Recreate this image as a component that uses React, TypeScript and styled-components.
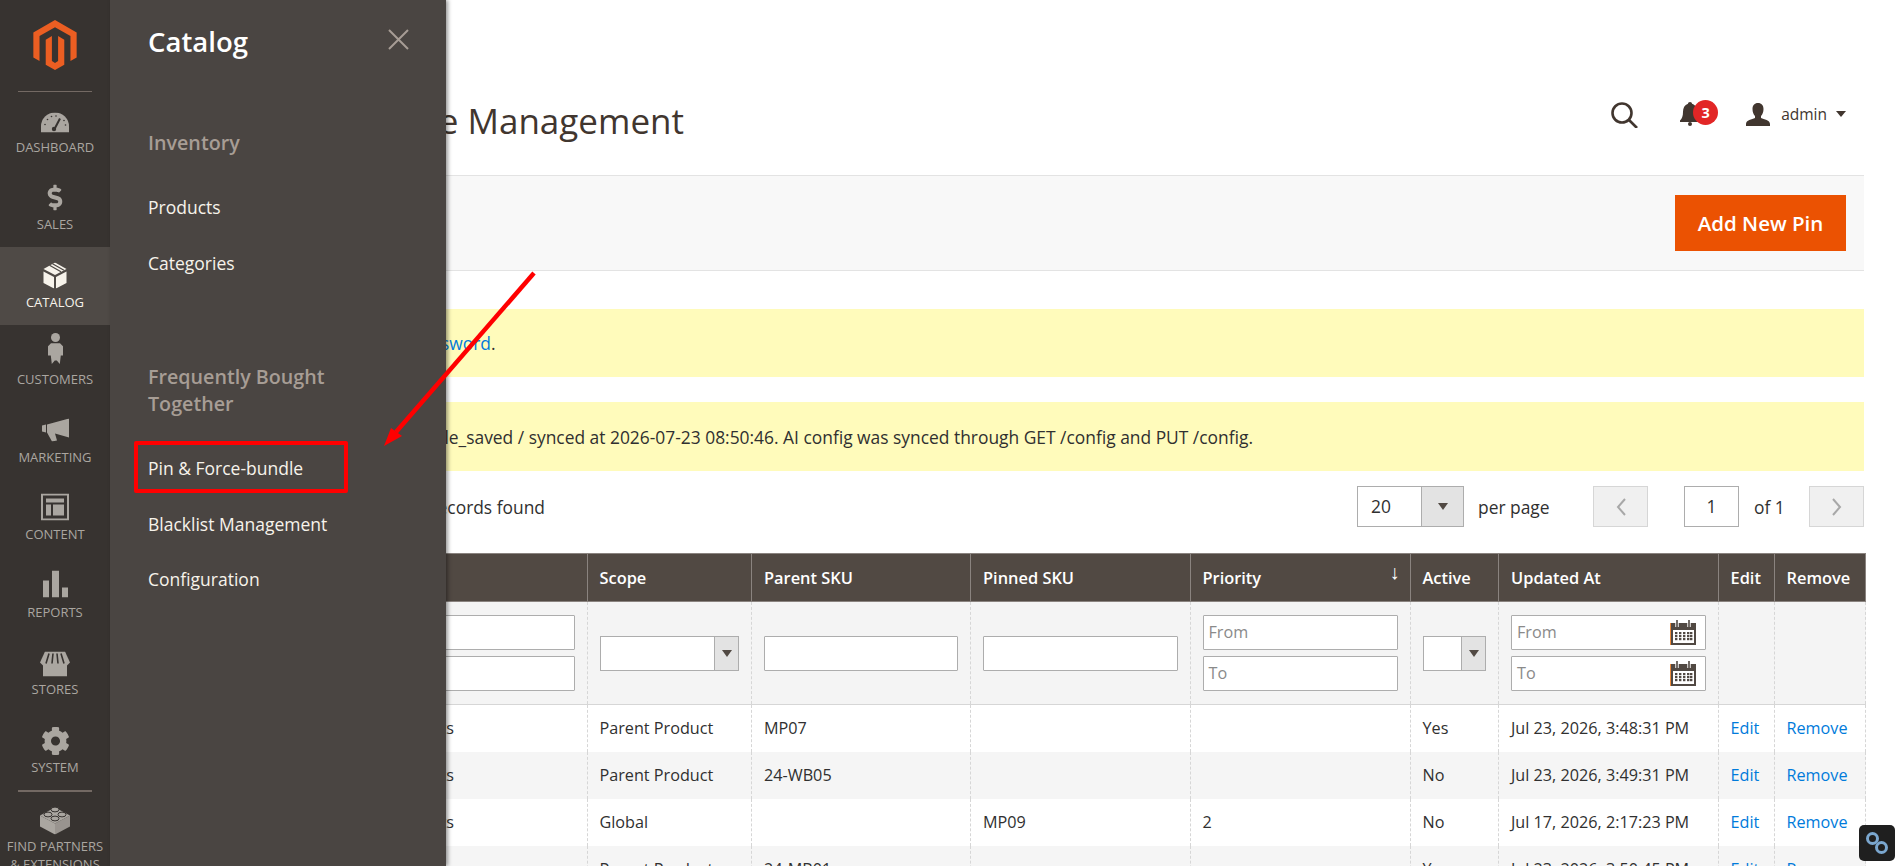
import React from "react";
import styled, { createGlobalStyle } from "styled-components";
import { SiMagento } from "react-icons/si";
import { FaDollarSign, FaCog } from "react-icons/fa";

const Global = createGlobalStyle`
  html, body { margin: 0; padding: 0; height: 866px; overflow: hidden; background: #fff; }
  body { font-family: "Open Sans", "Liberation Sans", sans-serif; color: #41362f; }
  * { box-sizing: border-box; }
`;

const Page = styled.div`
  display: flex;
  width: 1900px;
  height: 866px;
  overflow: hidden;
  position: relative;
`;

const Sidebar = styled.nav`
  width: 110px;
  flex: none;
  height: 866px;
  background: #373330;
  overflow: hidden;
  display: flex;
  flex-direction: column;
`;
const LogoBox = styled.div`
  height: 92px;
  margin: 0 18px;
  border-bottom: 1px solid #736963;
  display: flex;
  justify-content: center;
  padding-top: 20px;
  color: #eb5e22;
  flex: none;
`;
const NavItem = styled.div<{ $active?: boolean; $tall?: boolean }>`
  height: ${(p) => (p.$tall ? "76px" : "77.5px")};
  flex: none;
  display: flex;
  flex-direction: column;
  align-items: center;
  padding-top: 5px;
  background: ${(p) => (p.$active ? "#4f4a46" : "transparent")};
  color: ${(p) => (p.$active ? "#f7f3eb" : "#aaa6a0")};
`;
const IconSlot = styled.div<{ $shift?: number }>`
  height: 40.5px;
  display: flex;
  align-items: center;
  justify-content: center;
  flex: none;
  transform: translateY(${(p) => p.$shift ?? 0}px);
`;
const NavLabel = styled.div`
  font-size: 13px;
  line-height: 18px;
  text-transform: uppercase;
  text-align: center;
  white-space: nowrap;
`;
const PartnerDivider = styled.div`
  height: 2px;
  margin: 0 18px;
  background: #736963;
  flex: none;
`;

const Panel = styled.aside`
  position: absolute;
  left: 110px;
  top: 0;
  width: 335.5px;
  height: 866px;
  background: #4a4542;
  box-shadow: 2px 0 4px rgba(0, 0, 0, 0.4);
  padding-left: 38px;
  z-index: 5;
  color: #f7f3eb;
`;
const PanelHead = styled.div`
  display: flex;
  justify-content: space-between;
  padding: 24px 37px 0 0;
  height: 60px;
  margin-bottom: 69px;
`;
const PanelTitle = styled.div`
  font-size: 27.5px;
  font-weight: 600;
  line-height: 36px;
  color: #fff;
`;
const CloseIcon = styled.svg`
  width: 21px;
  height: 21px;
  margin-top: 5px;
  stroke: #a79d95;
  stroke-width: 2;
`;
const PanelHeading = styled.div`
  font-size: 19.7px;
  font-weight: 600;
  line-height: 27px;
  color: #a79d95;
  margin-bottom: 24px;
  width: 230px;
`;
const PanelLink = styled.div`
  font-size: 17.5px;
  line-height: 55.5px;
  height: 55.5px;
  white-space: nowrap;
  color: #f7f3eb;
`;
const PanelGap = styled.div`
  height: 72px;
`;
const RedBox = styled.div`
  position: absolute;
  left: 134px;
  top: 441px;
  width: 214px;
  height: 52px;
  border: 4px solid #ff0000;
  border-radius: 2px;
  z-index: 6;
`;
const Arrow = styled.svg`
  position: absolute;
  left: 0;
  top: 0;
  width: 1900px;
  height: 866px;
  z-index: 7;
  pointer-events: none;
`;

const Main = styled.main`
  flex: 1;
  min-width: 0;
  padding: 0 36px 0 30px;
  display: flex;
  flex-direction: column;
  font-size: 17.4px;
`;
const TopBar = styled.header`
  height: 175px;
  flex: none;
  display: flex;
  align-items: flex-start;
  justify-content: space-between;
`;
const PageTitle = styled.h1`
  margin: 96px 0 0;
  padding-left: 8px;
  font-size: 35px;
  line-height: 50px;
  font-weight: 400;
  color: #41362f;
  white-space: nowrap;
`;
const TopActions = styled.div`
  display: flex;
  align-items: center;
  margin-top: 100px;
  padding-right: 18px;
  position: relative;
`;
const SearchIcon = styled.svg`
  width: 27px;
  height: 26px;
  margin-right: 42px;
  margin-top: 2px;
  fill: none;
  stroke: #41362f;
  stroke-width: 2.6;
`;
const BellWrap = styled.div`
  position: relative;
  width: 20px;
  height: 24px;
  margin-right: 46px;
`;
const Badge = styled.span`
  position: absolute;
  left: 13px;
  top: -2px;
  width: 25px;
  height: 25px;
  border-radius: 50%;
  background: #e22626;
  color: #fff;
  font-size: 14.5px;
  font-weight: 700;
  line-height: 25px;
  text-align: center;
`;
const UserName = styled.span`
  font-size: 15.5px;
  margin: 0 9px 0 11px;
  line-height: 24px;
  color: #41362f;
`;
const Caret = styled.span`
  width: 0;
  height: 0;
  border-left: 5px solid transparent;
  border-right: 5px solid transparent;
  border-top: 6px solid #41362f;
`;
const ActionBar = styled.div`
  height: 96px;
  flex: none;
  background: #f8f8f8;
  border-top: 1px solid #e3e3e3;
  border-bottom: 1px solid #e3e3e3;
  display: flex;
  justify-content: flex-end;
  padding: 19px 18px 0 0;
`;
const PrimaryButton = styled.button`
  width: 171px;
  height: 56px;
  border: none;
  background: #eb5202;
  color: #fff;
  font-family: inherit;
  font-size: 20.5px;
  font-weight: 600;
  padding: 0;
`;
const Message = styled.div<{ $h: number; $top: number; $pad: number }>`
  height: ${(p) => p.$h}px;
  margin-top: ${(p) => p.$top}px;
  flex: none;
  background: #fffbbb;
  display: flex;
  align-items: center;
  padding-left: ${(p) => p.$pad}px;
  white-space: pre;
  color: #303030;
`;
const Link = styled.a`
  color: #007bdb;
`;
const Pager = styled.div`
  height: 41px;
  margin-top: 15px;
  flex: none;
  display: flex;
  align-items: center;
  justify-content: space-between;
`;
const Found = styled.div<{ $pad: number }>`
  padding-left: ${(p) => p.$pad}px;
  color: #303030;
`;
const PagerRight = styled.div`
  display: flex;
  align-items: center;
`;
const PerSelect = styled.div`
  width: 107px;
  height: 41px;
  border: 1px solid #adadad;
  display: flex;
  background: #fff;
`;
const PerValue = styled.div`
  flex: 1;
  padding-left: 13px;
  line-height: 39px;
  color: #303030;
`;
const SelectArrowBox = styled.div<{ $w: number }>`
  width: ${(p) => p.$w}px;
  flex: none;
  background: #e3e3e3;
  border-left: 1px solid #adadad;
  display: flex;
  align-items: center;
  justify-content: center;
`;
const Tri = styled.span`
  width: 0;
  height: 0;
  border-left: 5px solid transparent;
  border-right: 5px solid transparent;
  border-top: 7px solid #514943;
`;
const PerText = styled.span`
  margin: 0 0 0 14px;
  width: 115px;
  color: #303030;
`;
const PageBtn = styled.div`
  width: 55px;
  height: 41px;
  background: #f0f0f0;
  border: 1px solid #d6d6d6;
  display: flex;
  align-items: center;
  justify-content: center;
`;
const Chevron = styled.svg`
  width: 12px;
  height: 20px;
  fill: none;
  stroke: #a8a8a8;
  stroke-width: 2;
`;
const PageInput = styled.div`
  width: 55px;
  height: 41px;
  margin-left: 36px;
  border: 1px solid #adadad;
  text-align: center;
  line-height: 39px;
  color: #303030;
`;
const OfText = styled.span`
  width: 55px;
  padding-left: 15px;
  margin-right: 15px;
  color: #303030;
`;
const Table = styled.table`
  width: 1724px;
  margin-top: 26px;
  border-collapse: collapse;
  table-layout: fixed;
  font-size: 16.2px;
`;
const Col = styled.col<{ $w: number }>`
  width: ${(p) => p.$w}px;
`;
const Th = styled.th`
  height: 48px;
  background: #514943;
  color: #fff;
  font-size: 16.4px;
  font-weight: 600;
  text-align: left;
  padding: 0 12px;
  border: 1px solid #8a837f;
  position: relative;
  white-space: nowrap;
`;
const SortMark = styled.span`
  position: absolute;
  right: 10px;
  top: 4px;
  font-size: 20px;
  font-weight: 400;
`;
const FilterCell = styled.td`
  height: 103px;
  background: #f4f4f4;
  padding: 0 12px;
  border-left: 1px dashed #d6d6d6;
  border-right: 1px dashed #d6d6d6;
  border-bottom: 1px solid #d6d6d6;
  vertical-align: middle;
`;
const Stack = styled.div`
  display: flex;
  flex-direction: column;
  gap: 6px;
`;
const Field = styled.div`
  position: relative;
  height: 35px;
  width: 100%;
  background: #fff;
  border: 1px solid #adadad;
  border-radius: 1px;
  padding-left: 5px;
  line-height: 33px;
  color: #8a8a8a;
`;
const CalIcon = styled.svg`
  position: absolute;
  right: 9px;
  top: 4px;
  width: 26px;
  height: 25px;
`;
const SelectField = styled.div`
  height: 35px;
  width: 100%;
  background: #fff;
  border: 1px solid #adadad;
  display: flex;
  justify-content: flex-end;
`;
const Td = styled.td<{ $even: boolean }>`
  height: 47px;
  padding: 0 12px;
  background: ${(p) => (p.$even ? "#f5f5f5" : "#fff")};
  border-left: 1px dashed #d6d6d6;
  border-right: 1px dashed #d6d6d6;
  color: #303030;
  white-space: nowrap;
`;
const FloatBtn = styled.div`
  position: absolute;
  left: 1859px;
  top: 825px;
  width: 36px;
  height: 36px;
  border-radius: 5px;
  background: #1f1f1f;
  display: flex;
  align-items: center;
  justify-content: center;
  z-index: 4;
`;

const Gauge = () => (
  <svg width="28" height="20" viewBox="0 0 28 20">
    <path d="M0 20v-6a14 14 0 0 1 28 0v6z" fill="currentColor" />
    <path d="M13 17.5 19 6" stroke="#373330" strokeWidth="2" />
    <circle cx="13" cy="16.5" r="2.2" fill="#373330" />
    <g fill="#373330">
      <circle cx="4" cy="12" r=".8" /><circle cx="6.5" cy="7" r=".8" /><circle cx="10.5" cy="4" r=".8" />
      <circle cx="15" cy="3.5" r=".8" /><circle cx="23" cy="8" r=".8" /><circle cx="24.5" cy="12.5" r=".8" />
    </g>
  </svg>
);
const BoxIcon = () => (
  <svg width="24" height="26" viewBox="0 0 24 26">
    <path d="M0.5 9 11 14.5V26L0.5 20.5z" fill="currentColor" />
    <path d="M23.5 9 13 14.5V26L23.5 20.5z" fill="currentColor" />
    <path d="M12 0 23.5 6.5 12 12.5 0.5 6.5z" fill="currentColor" />
    <path d="M6.5 2.8 18 9.2M9.5 1.3 21 7.7" stroke="#4f4a46" strokeWidth="1.3" fill="none" />
  </svg>
);
const PersonIcon = () => (
  <svg width="15" height="31" viewBox="0 0 15 31">
    <circle cx="7.5" cy="4.5" r="4.5" fill="currentColor" />
    <path d="M3 10.2h9l3 3v9.3h-2.2l-1 8.5-3-3.5h-2l-3 3.5-1-8.5H0v-9.3z" fill="currentColor" />
  </svg>
);
const MegaphoneIcon = () => (
  <svg width="27" height="23" viewBox="0 0 27 23">
    <path d="M0 7l4-1v8l-4-1z" fill="currentColor" />
    <path d="M5 6 27 0V19L13 15l2 7-5 1-5-9z" fill="currentColor" />
  </svg>
);
const ContentIcon = () => (
  <svg width="28" height="27" viewBox="0 0 28 27">
    <rect x="1" y="1" width="26" height="25" fill="none" stroke="currentColor" strokeWidth="2" />
    <rect x="5" y="5" width="18" height="4" fill="currentColor" />
    <rect x="5" y="11" width="5" height="11" fill="currentColor" />
    <rect x="12" y="11" width="11" height="11" fill="currentColor" />
  </svg>
);
const BarsIcon = () => (
  <svg width="25" height="27" viewBox="0 0 25 27" fill="currentColor">
    <rect x="0" y="10" width="6" height="17" />
    <rect x="9" y="0" width="7" height="27" />
    <rect x="19" y="17" width="6" height="10" />
  </svg>
);
const StoreIcon = () => (
  <svg width="30" height="25" viewBox="0 0 30 25">
    <rect x="3" y="12" width="24" height="13" fill="currentColor" />
    <path d="M5 0H25L30 11 27 14H3L0 11z" fill="currentColor" />
    <path d="M9 2 6 12M13 2 12 12M17 2 18 12M21 2 24 12" stroke="#373330" strokeWidth="1.6" fill="none" />
  </svg>
);
const LegoIcon = () => (
  <svg width="30" height="29" viewBox="0 0 30 29">
    <path d="M0 10 15 18V29L0 21z" fill="currentColor" />
    <path d="M30 10 15 18V29L30 21z" fill="currentColor" opacity=".85" />
    <path d="M15 2 30 10 15 18 0 10z" fill="currentColor" />
    <g fill="currentColor" stroke="#373330" strokeWidth="1">
      <ellipse cx="15" cy="4" rx="4" ry="2.4" /><ellipse cx="8" cy="9" rx="4" ry="2.4" />
      <ellipse cx="22" cy="9" rx="4" ry="2.4" /><ellipse cx="15" cy="13" rx="4" ry="2.4" />
    </g>
  </svg>
);
const Calendar = () => (
  <CalIcon viewBox="0 0 26 25">
    <rect x="0" y="3" width="2" height="22" fill="#eb8a3c" />
    <rect x="1" y="3" width="25" height="22" fill="#514943" />
    <rect x="3" y="10" width="21" height="13" fill="#fff" />
    <path d="M7 0v7M19 0v7" stroke="#fff" strokeWidth="3.4" />
    <path d="M7 0v7M19 0v7" stroke="#514943" strokeWidth="1.6" />
    <g fill="#514943">
      {[12, 15, 18].map((y) =>
        [5, 9, 13, 17, 20].map((x) => <rect key={`${x}-${y}`} x={x} y={y} width="2.4" height="2.2" />)
      )}
    </g>
  </CalIcon>
);

const navItems: { label: string; icon: React.ReactNode; active?: boolean; shift?: number }[] = [
  { label: "Dashboard", icon: <Gauge />, shift: 5.5 },
  { label: "Sales", icon: <FaDollarSign size={26} />, shift: 2.5 },
  { label: "Catalog", icon: <BoxIcon />, active: true, shift: 3.5 },
  { label: "Customers", icon: <PersonIcon />, shift: -1 },
  { label: "Marketing", icon: <MegaphoneIcon />, shift: 2.5 },
  { label: "Content", icon: <ContentIcon />, shift: 2.5 },
  { label: "Reports", icon: <BarsIcon />, shift: 1.5 },
  { label: "Stores", icon: <StoreIcon />, shift: 4.5 },
  { label: "System", icon: <FaCog size={29} />, shift: 3.5 },
];

const colWidths = [177, 269.5, 164.5, 219, 219.5, 220, 88.5, 219.5, 56, 91.5];
const rows = [
  ["Parent Product", "MP07", "", "", "Yes", "Jul 23, 2026, 3:48:31 PM"],
  ["Parent Product", "24-WB05", "", "", "No", "Jul 23, 2026, 3:49:31 PM"],
  ["Global", "", "MP09", "2", "No", "Jul 17, 2026, 2:17:23 PM"],
  ["Parent Product", "24-MB01", "", "", "Yes", "Jul 23, 2026, 3:50:45 PM"],
];

export default function App() {
  return (
    <Page>
      <Global />
      <Sidebar>
        <LogoBox><SiMagento size={50} /></LogoBox>
        {navItems.map((n) => (
          <NavItem key={n.label} $active={n.active}>
            <IconSlot $shift={n.shift}>{n.icon}</IconSlot>
            <NavLabel>{n.label}</NavLabel>
          </NavItem>
        ))}
        <PartnerDivider />
        <NavItem $tall>
          <IconSlot $shift={3.5}><LegoIcon /></IconSlot>
          <NavLabel>Find Partners<br />&amp; Extensions</NavLabel>
        </NavItem>
      </Sidebar>

      <Panel>
        <PanelHead>
          <PanelTitle>Catalog</PanelTitle>
          <CloseIcon viewBox="0 0 21 21"><path d="M1 1 20 20M20 1 1 20" /></CloseIcon>
        </PanelHead>
        <PanelHeading>Inventory</PanelHeading>
        <PanelLink>Products</PanelLink>
        <PanelLink>Categories</PanelLink>
        <PanelGap />
        <PanelHeading>Frequently Bought Together</PanelHeading>
        <PanelLink>Pin &amp; Force-bundle</PanelLink>
        <PanelLink>Blacklist Management</PanelLink>
        <PanelLink>Configuration</PanelLink>
      </Panel>
      <RedBox />
      <Arrow viewBox="0 0 1900 866">
        <path d="M534 273 396 432" stroke="#ff0000" strokeWidth="4.5" fill="none" />
        <path d="M384 446 391 428 402 436z" fill="#ff0000" />
      </Arrow>

      <Main>
        <TopBar>
          <PageTitle>Pin &amp; Force-bundle Management</PageTitle>
          <TopActions>
            <SearchIcon viewBox="0 0 27 26">
              <circle cx="11" cy="11" r="9.5" />
              <path d="M18 18 26 26" />
            </SearchIcon>
            <BellWrap>
              <svg width="20" height="24" viewBox="0 0 20 24" fill="#41362f">
                <path d="M10 0c1.2 0 2 .8 2 1.8C15.5 3 17 6 17 10c0 4 1 6.500 3 8.500V20H0v-1.500C2 16.500 3 14 3 10c0-4 1.500-7 5-8.200C8 .8 8.800 0 10 0z" />
                <circle cx="10" cy="22" r="2" />
              </svg>
              <Badge>3</Badge>
            </BellWrap>
            <svg width="24" height="23" viewBox="0 0 24 23" fill="#41362f">
              <path d="M12 0c3.500 0 5.500 2.500 5.500 6 0 3-1 5.500-2.500 7v2c3 1.500 9 2 9 6v2H0v-2c0-4 6-4.500 9-6v-2C7.500 11.500 6.500 9 6.500 6 6.500 2.500 8.500 0 12 0z" />
            </svg>
            <UserName>admin</UserName>
            <Caret />
          </TopActions>
        </TopBar>
        <ActionBar><PrimaryButton>Add New Pin</PrimaryButton></ActionBar>
        <Message $h={68} $top={38} $pad={78}>It's time to <Link>change your password</Link>.</Message>
        <Message $h={69} $top={25} $pad={103}>AI sync status: bundle_rule_saved / synced at 2026-07-23 08:50:46. AI config was synced through GET /config and PUT /config.</Message>
        <Pager>
          <Found $pad={276}>4 records found</Found>
          <PagerRight>
            <PerSelect>
              <PerValue>20</PerValue>
              <SelectArrowBox $w={42}><Tri /></SelectArrowBox>
            </PerSelect>
            <PerText>per page</PerText>
            <PageBtn>
              <Chevron viewBox="0 0 12 20"><path d="M10 2 3 10l7 8" /></Chevron>
            </PageBtn>
            <PageInput>1</PageInput>
            <OfText>of 1</OfText>
            <PageBtn>
              <Chevron viewBox="0 0 12 20"><path d="M2 2l7 8-7 8" /></Chevron>
            </PageBtn>
          </PagerRight>
        </Pager>
        <Table>
          <colgroup>
            {colWidths.map((w, i) => <Col key={i} $w={w} />)}
          </colgroup>
          <thead>
            <tr>
              <Th>ID</Th><Th>Type</Th><Th>Scope</Th><Th>Parent SKU</Th><Th>Pinned SKU</Th>
              <Th>Priority<SortMark>↓</SortMark></Th>
              <Th>Active</Th><Th>Updated At</Th><Th>Edit</Th><Th>Remove</Th>
            </tr>
            <tr>
              <FilterCell><Stack><Field /><Field /></Stack></FilterCell>
              <FilterCell><Stack><Field /><Field /></Stack></FilterCell>
              <FilterCell>
                <SelectField><SelectArrowBox $w={24}><Tri /></SelectArrowBox></SelectField>
              </FilterCell>
              <FilterCell><Field /></FilterCell>
              <FilterCell><Field /></FilterCell>
              <FilterCell><Stack><Field>From</Field><Field>To</Field></Stack></FilterCell>
              <FilterCell>
                <SelectField><SelectArrowBox $w={24}><Tri /></SelectArrowBox></SelectField>
              </FilterCell>
              <FilterCell>
                <Stack>
                  <Field>From<Calendar /></Field>
                  <Field>To<Calendar /></Field>
                </Stack>
              </FilterCell>
              <FilterCell />
              <FilterCell />
            </tr>
          </thead>
          <tbody>
            {rows.map((r, i) => (
              <tr key={i}>
                <Td $even={i % 2 === 1}>{i + 1}</Td>
                <Td $even={i % 2 === 1}>Pinned Products</Td>
                {r.map((c, j) => <Td key={j} $even={i % 2 === 1}>{c}</Td>)}
                <Td $even={i % 2 === 1}><Link>Edit</Link></Td>
                <Td $even={i % 2 === 1}><Link>Remove</Link></Td>
              </tr>
            ))}
          </tbody>
        </Table>
      </Main>

      <FloatBtn>
        <svg width="24" height="24" viewBox="0 0 24 24" fill="none" stroke="#7ba7cf" strokeWidth="3">
          <circle cx="7.500" cy="7.500" r="5" />
          <circle cx="16.500" cy="16.500" r="5" />
        </svg>
      </FloatBtn>
    </Page>
  );
}
